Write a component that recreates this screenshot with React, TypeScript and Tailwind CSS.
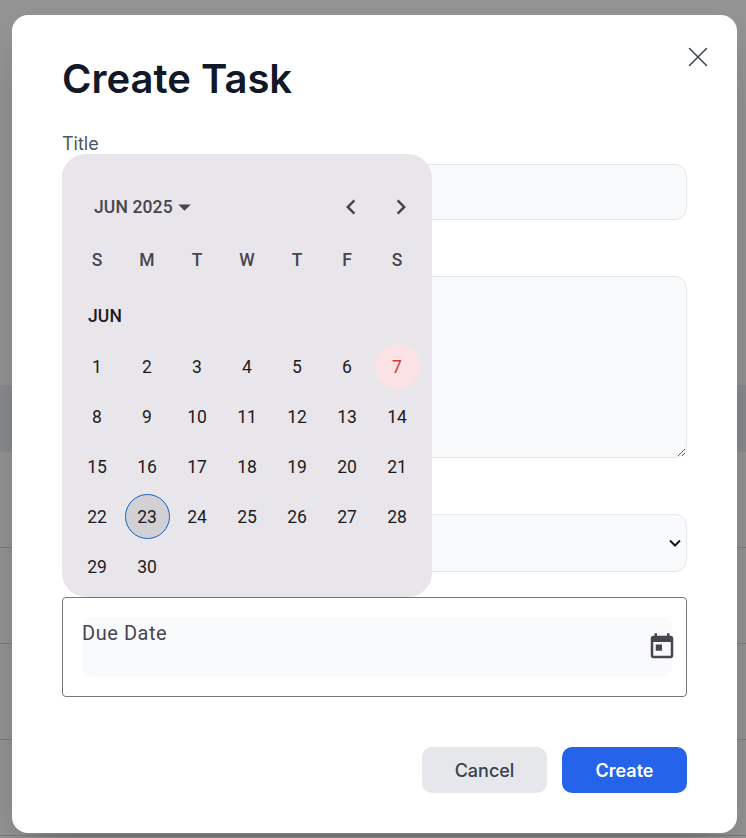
const inter = "font-['Inter',sans-serif]";

const weeks: (number | null)[][] = [
  [1, 2, 3, 4, 5, 6, 7],
  [8, 9, 10, 11, 12, 13, 14],
  [15, 16, 17, 18, 19, 20, 21],
  [22, 23, 24, 25, 26, 27, 28],
  [29, 30, null, null, null, null, null],
];

function Day({ d }: { d: number | null }) {
  if (d === null) return <div className="w-[50px] h-[50px]" />;
  let cls = "text-[#1d1b20]";
  if (d === 7) cls = "text-[#d0393f] bg-[#fbe3e5]";
  if (d === 23) cls = "text-[#1d1b20] bg-[#d2d0d4] border border-[#1565c0]";
  return (
    <div className="w-[50px] h-[50px] flex items-center justify-center">
      <div className={`w-[45px] h-[45px] pt-[1px] rounded-full flex items-center justify-center text-[17.5px] ${cls}`}>{d}</div>
    </div>
  );
}

function CalendarPopup() {
  return (
    <div className="absolute left-[50px] top-[139px] w-[370px] h-[443px] rounded-[24px] bg-[#e8e6eb] px-[10px] font-['Roboto',sans-serif]">
      <div className="flex items-center justify-between h-[50px] mt-[28px] pl-[22px] -mr-[4px]">
        <div className="flex items-center text-[17.5px] font-medium tracking-[0.125px] text-[#49454f]">
          <span>JUN 2025</span>
          <svg width="13" height="7" viewBox="0 0 13 7" className="ml-[5px] mt-[1px]">
            <path d="M0.25 0.5h12.5L6.5 6.75z" fill="#49454f" />
          </svg>
        </div>
        <div className="flex">
          <div className="w-[50px] h-[50px] flex items-center justify-center">
            <svg width="30" height="30" viewBox="0 0 24 24" fill="#49454f">
              <path d="M15.41 7.41 14 6l-6 6 6 6 1.41-1.41L10.83 12z" />
            </svg>
          </div>
          <div className="w-[50px] h-[50px] flex items-center justify-center">
            <svg width="30" height="30" viewBox="0 0 24 24" fill="#49454f">
              <path d="M10 6 8.59 7.41 13.17 12l-4.58 4.59L10 18l6-6z" />
            </svg>
          </div>
        </div>
      </div>
      <div className="grid grid-cols-7 h-[50px] mt-[3px]">
        {["S", "M", "T", "W", "T", "F", "S"].map((d, i) => (
          <div key={i} className="flex items-center justify-center text-[17.5px] font-medium text-[#49454f]">{d}</div>
        ))}
      </div>
      <div className="h-[50px] mt-[6px] pl-[16px] flex items-center text-[17.5px] tracking-[0.125px] font-medium text-[#1d1b20]">JUN</div>
      <div className="mt-[0.5px]">
        {weeks.map((w, i) => (
          <div key={i} className="flex">
            {w.map((d, j) => (
              <Day key={j} d={d} />
            ))}
          </div>
        ))}
      </div>
    </div>
  );
}

export default function App() {
  return (
    <div className={`relative w-[746px] h-[838px] overflow-hidden bg-white ${inter}`}>
      {/* page underneath */}
      <div className="pt-[385px]">
        <div className="h-[67px] bg-[#eef0f6]" />
        <div className="h-[96px] border-b border-[#d6d8dc]" />
        <div className="h-[96px] border-b border-[#d6d8dc]" />
        <div className="h-[96px] border-b border-[#d6d8dc]" />
        <div className="h-[96px] border-b border-[#d6d8dc]" />
      </div>
      {/* overlay */}
      <div className="absolute inset-0 bg-black/[.42] pl-[12px] pt-[15px]">
        <div className="relative w-[725px] h-[818px] rounded-[16px] bg-white shadow-2xl px-[50px] pt-[36px]">
          <svg width="22" height="22" viewBox="0 0 22 22" className="absolute right-[28px] top-[31px]" fill="none" stroke="#374151" strokeWidth="1.5" strokeLinecap="round">
            <path d="M2.5 2.5 19.5 19.5M19.5 2.5 2.5 19.5" />
          </svg>
          <h2 className="text-[40px] leading-[56px] font-semibold text-[#111827]">Create Task</h2>
          <div className="mt-[25px]">
            <label className="block text-[18px] leading-[24px] text-[#4b5563] mb-[8px]">Title</label>
            <input className="block w-full h-[56px] rounded-[12px] border border-[#e5e7eb] bg-[#f9fafb]" />
          </div>
          <div className="mt-[24px]">
            <label className="block text-[18px] leading-[24px] text-[#4b5563] mb-[8px]">Description</label>
            <textarea className="block w-full h-[182px] rounded-[12px] border border-[#e5e7eb] bg-[#f9fafb]" />
          </div>
          <div className="mt-[24px]">
            <label className="block text-[18px] leading-[24px] text-[#4b5563] mb-[8px]">Status</label>
            <div className="relative h-[58px] rounded-[12px] border border-[#e5e7eb] bg-[#f9fafb]">
              <svg width="14" height="14" viewBox="0 0 14 14" className="absolute right-[4px] top-[21px]" fill="none" stroke="#111827" strokeWidth="2">
                <path d="M2 4.5 7 9.5 12 4.5" />
              </svg>
            </div>
          </div>
          <div className="relative mt-[25px] h-[100px] rounded-[4px] border border-[#79747e] pl-[19px] pr-[14px] pt-[19px]">
            <div className="h-[60px] rounded-[10px] bg-[#f9fafb] pt-[4px] font-['Roboto',sans-serif] text-[20px] leading-[24px] tracking-[0.55px] text-[#49454f]">Due Date</div>
            <svg width="30" height="30" viewBox="0 0 24 24" fill="#49454f" className="absolute right-[9px] top-[34px]">
              <path d="M19 3h-1V1h-2v2H8V1H6v2H5c-1.11 0-1.99.9-1.99 2L3 19c0 1.1.89 2 2 2h14c1.1 0 2-.9 2-2V5c0-1.1-.9-2-2-2zm0 16H5V8h14v11zM7 10h5v5H7z" />
            </svg>
          </div>
          <div className="mt-[50px] flex justify-end gap-[15px]">
            <button className="w-[125px] h-[46px] pt-[1px] rounded-[10px] bg-[#e5e7eb] text-[#374151] text-[18px] font-medium">Cancel</button>
            <button className="w-[125px] h-[46px] pt-[1px] rounded-[10px] bg-[#2563eb] text-white text-[18px] font-semibold">Create</button>
          </div>
          <CalendarPopup />
        </div>
      </div>
    </div>
  );
}
